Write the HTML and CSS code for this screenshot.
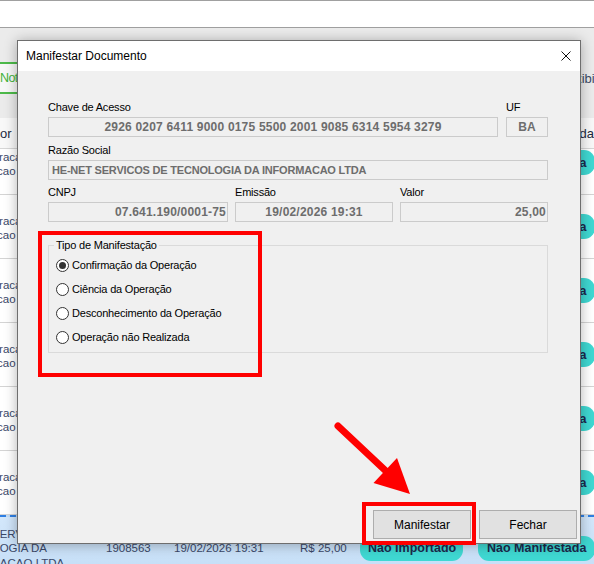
FILE: index.html
```html
<!DOCTYPE html>
<html lang="pt-BR">
<head>
<meta charset="utf-8">
<title>Manifestar Documento</title>
<link rel="stylesheet" href="styles.css">
</head>
<body>
<div class="app">
  <div class="topbar"></div>
  <div class="toolbar">
    <div class="tabrow">
      <div class="tab">Notas Recebidas</div>
      <div class="toolbar-link">Exibir</div>
    </div>
  </div>
  <div class="grid-head">
    <div class="hcell clip-end"><span>Fornecedor</span></div>
    <div class="hcell"></div>
    <div class="hcell"></div>
    <div class="hcell"></div>
    <div class="hcell"></div>
    <div class="hcell head-right">Manifestada</div>
  </div>
  <div class="grid-body">
    <div class="grid-scroll">
      <div class="grow">
        <div class="cell name"><span class="l1">Integracao</span><span class="l2">Informacao LTDA</span></div>
        <div class="cell"></div><div class="cell"></div><div class="cell"></div><div class="cell"></div>
        <div class="cell"><span class="pill pill-m">Não Manifestada</span></div>
      </div>
      <div class="grow">
        <div class="cell name"><span class="l1">Integracao</span><span class="l2">Informacao LTDA</span></div>
        <div class="cell"></div><div class="cell"></div><div class="cell"></div><div class="cell"></div>
        <div class="cell"><span class="pill pill-m">Não Manifestada</span></div>
      </div>
      <div class="grow">
        <div class="cell name"><span class="l1">Integracao</span><span class="l2">Informacao LTDA</span></div>
        <div class="cell"></div><div class="cell"></div><div class="cell"></div><div class="cell"></div>
        <div class="cell"><span class="pill pill-m">Não Manifestada</span></div>
      </div>
      <div class="grow">
        <div class="cell name"><span class="l1">Integracao</span><span class="l2">Informacao LTDA</span></div>
        <div class="cell"></div><div class="cell"></div><div class="cell"></div><div class="cell"></div>
        <div class="cell"><span class="pill pill-m">Não Manifestada</span></div>
      </div>
      <div class="grow">
        <div class="cell name"><span class="l1">Integracao</span><span class="l2">Informacao LTDA</span></div>
        <div class="cell"></div><div class="cell"></div><div class="cell"></div><div class="cell"></div>
        <div class="cell"><span class="pill pill-m">Não Manifestada</span></div>
      </div>
      <div class="grow">
        <div class="cell name"><span class="l1">Integracao</span><span class="l2">Informacao LTDA</span></div>
        <div class="cell"></div><div class="cell"></div><div class="cell"></div><div class="cell"></div>
        <div class="cell"><span class="pill pill-m">Não Manifestada</span></div>
      </div>
      <div class="grow selected">
        <div class="cell name three"><span class="s1">SERVICOS DE</span><span class="s2">TECNOLOGIA DA</span><span class="s3">INFORMACAO LTDA</span></div>
        <div class="cell txt">1908563</div>
        <div class="cell txt">19/02/2026 19:31</div>
        <div class="cell txt">R$ 25,00</div>
        <div class="cell"><span class="pill pill-i">Não Importado</span></div>
        <div class="cell"><span class="pill pill-m">Não Manifestada</span></div>
      </div>
    </div>
  </div>
</div>

<div class="dialog">
  <div class="dlg-title">
    <span class="dlg-caption">Manifestar Documento</span>
    <svg class="dlg-close" width="10" height="10" viewBox="0 0 10 10"><path d="M0.5 0.5 L9.5 9.5 M9.5 0.5 L0.5 9.5" stroke="#111" stroke-width="1" fill="none"/></svg>
  </div>
  <div class="dlg-body">
    <div class="frow frow-a">
      <div class="fcol">
        <div class="lbl">Chave de Acesso</div>
        <div class="fld center num">2926 0207 6411 9000 0175 5500 2001 9085 6314 5954 3279</div>
      </div>
      <div class="fcol">
        <div class="lbl">UF</div>
        <div class="fld center">BA</div>
      </div>
    </div>
    <div class="frow frow-b">
      <div class="fcol">
        <div class="lbl">Razão Social</div>
        <div class="fld left caps">HE-NET SERVICOS DE TECNOLOGIA DA INFORMACAO LTDA</div>
      </div>
    </div>
    <div class="frow frow-c">
      <div class="fcol">
        <div class="lbl">CNPJ</div>
        <div class="fld right num">07.641.190/0001-75</div>
      </div>
      <div class="fcol">
        <div class="lbl">Emissão</div>
        <div class="fld center num">19/02/2026 19:31</div>
      </div>
      <div class="fcol">
        <div class="lbl">Valor</div>
        <div class="fld right num">25,00</div>
      </div>
    </div>
    <fieldset class="group">
      <legend>Tipo de Manifestação</legend>
      <div class="radio"><span class="rdot checked"></span>Confirmação da Operação</div>
      <div class="radio"><span class="rdot"></span>Ciência da Operação</div>
      <div class="radio"><span class="rdot"></span>Desconhecimento da Operação</div>
      <div class="radio"><span class="rdot"></span>Operação não Realizada</div>
    </fieldset>
    <div class="btnrow">
      <button class="btn">Manifestar</button>
      <button class="btn">Fechar</button>
    </div>
  </div>
</div>

<svg class="annot" width="594" height="564" viewBox="0 0 594 564">
  <rect x="40" y="233" width="220" height="142" fill="none" stroke="#ff0000" stroke-width="4"/>
  <rect x="364" y="504" width="110" height="39" fill="none" stroke="#ff0000" stroke-width="4"/>
  <line x1="338" y1="426" x2="388" y2="473" stroke="#ff0000" stroke-width="7" stroke-linecap="round"/>
  <polygon points="410,494 373.5,483 397,458" fill="#ff0000"/>
</svg>
</body>
</html>
```
FILE: styles.css
```css
* { box-sizing: border-box; }
html, body { margin: 0; padding: 0; }
body {
  width: 594px;
  height: 564px;
  overflow: hidden;
  position: relative;
  background: #f0f0f0;
  font-family: "Liberation Sans", Arial, sans-serif;
}

/* ---------- background application ---------- */
.app { display: flex; flex-direction: column; height: 564px; }
.topbar {
  flex: none;
  height: 28px;
  background: #ffffff;
  border-top: 1px solid #a0a0a0;
  border-bottom: 1px solid #a0a0a0;
}
.toolbar {
  flex: none;
  height: 90px;
  padding-top: 34px;
  background: #ebebeb;
}
.tabrow { display: flex; justify-content: space-between; align-items: center; height: 32px; }
.tab {
  width: 120px;
  height: 32px;
  border-top: 2px solid #4dba4a;
  border-bottom: 2px solid #4dba4a;
  background: #f7f7f7;
  color: #3fb23a;
  font-size: 12.5px;
  letter-spacing: -0.6px;
  line-height: 28px;
  white-space: nowrap;
  overflow: hidden;
}
.toolbar-link { font-size: 13px; color: #3c4a66; margin-right: -5px; white-space: nowrap; }

.grid-head {
  flex: none;
  display: grid;
  grid-template-columns: 106px 68px 126px 60px 118px 118px;
  height: 31px;
  background: #f8f8f8;
  border-bottom: 1px solid #d6d6d6;
  font-size: 13px;
  color: #1e2a3e;
}
.hcell { display: flex; align-items: center; white-space: nowrap; overflow: hidden; }
.clip-end { width: 11.5px; justify-content: flex-end; }
.head-right { justify-content: flex-end; padding-right: 2px; }

.grid-body { flex: 1; overflow: hidden; background: #ffffff; }
.grid-scroll { margin-top: -18px; }
.grow {
  display: grid;
  grid-template-columns: 106px 68px 126px 60px 118px 118px;
  height: 64px;
  border-bottom: 1px solid #d4d4d4;
  font-size: 11.5px;
  color: #3a4868;
}
.cell { display: flex; align-items: center; white-space: nowrap; overflow: visible; }
.name { flex-direction: column; align-items: flex-start; justify-content: center; padding-top: 3px; overflow: hidden; line-height: 14.5px; }
.name .l1 { margin-left: -26.5px; }
.name .l2 { margin-left: -42px; }
.name.three { padding-top: 1px; }
.name .s1 { margin-left: -8px; }
.name .s2 { margin-left: -47px; }
.name .s3 { margin-left: -45.5px; }

.selected {
  background: linear-gradient(#d3e7fb, #c3ddf6);
  border-top: 2px dashed #2f7fe3;
  border-bottom: none;
}
.pill {
  display: inline-flex;
  align-items: center;
  height: 25px;
  border-radius: 11px;
  background: #3fd8d2;
  color: #1b2a4c;
  font-weight: bold;
  font-size: 12.5px;
  padding: 0 8px;
}
.pill-i { width: 103px; }
.pill-m { width: 117px; padding-left: 9px; }

/* ---------- dialog ---------- */
.dialog {
  position: absolute;
  left: 17px;
  top: 40px;
  width: 564px;
  height: 504px;
  background: #f0f0f0;
  border: 1px solid #6e6e6e;
  box-shadow: 0 1px 12px rgba(0, 0, 0, 0.3);
  display: flex;
  flex-direction: column;
}
.dlg-title {
  flex: none;
  height: 30px;
  background: #ffffff;
  display: flex;
  align-items: center;
  justify-content: space-between;
  padding: 0 9px 0 8px;
}
.dlg-caption { font-size: 12px; color: #000; }
.dlg-close { display: block; }

.dlg-body {
  flex: 1;
  display: flex;
  flex-direction: column;
  padding: 29px 32px 4px 30px;
}
.lbl {
  font-size: 11px;
  line-height: 14px;
  height: 14px;
  letter-spacing: -0.2px;
  color: #000;
  margin-bottom: 3px;
  white-space: nowrap;
}
.fld {
  height: 20px;
  border: 1px solid #cbcbcb;
  background: #f0f0f0;
  color: #6d6d6d;
  font-weight: bold;
  font-size: 12px;
  line-height: 18px;
  white-space: nowrap;
  overflow: hidden;
}
.fld.num { letter-spacing: 0.2px; }
.fld.caps { font-size: 11px; letter-spacing: -0.2px; }
.fld.center { text-align: center; }
.fld.left { text-align: left; padding-left: 3px; }
.fld.right { text-align: right; padding-right: 1px; }

.frow { display: grid; }
.frow-a { grid-template-columns: 1fr 42px; column-gap: 8px; }
.frow-b { grid-template-columns: 1fr; margin-top: 6px; }
.frow-c { grid-template-columns: 180px 158px 148px; column-gap: 7px; margin-top: 5px; }

.group {
  margin: 16px 0 0 0;
  padding: 1px 0 3px 7px;
  border: 1px solid #dadada;
  min-width: 0;
}
.group legend {
  font-size: 11px;
  line-height: 14px;
  letter-spacing: -0.2px;
  padding: 0 2px;
  margin-left: -2px;
  color: #000;
}
.radio {
  display: flex;
  align-items: center;
  height: 24px;
  font-size: 11px;
  letter-spacing: -0.2px;
  color: #000;
}
.rdot {
  position: relative;
  width: 13px;
  height: 13px;
  border: 1px solid #333333;
  border-radius: 50%;
  background: #ffffff;
  margin-right: 3px;
  flex: none;
}
.rdot.checked::after {
  content: "";
  position: absolute;
  left: 2px;
  top: 2px;
  width: 7px;
  height: 7px;
  border-radius: 50%;
  background: #333333;
}

.btnrow {
  margin-top: auto;
  margin-right: -29px;
  display: flex;
  justify-content: flex-end;
  gap: 8px;
}
.btn {
  width: 98px;
  height: 29px;
  border: 1px solid #adadad;
  background: #e1e1e1;
  color: #000;
  font-family: "Liberation Sans", Arial, sans-serif;
  font-size: 12px;
  padding: 0;
  margin: 0;
}

/* ---------- annotation overlay ---------- */
.annot { position: absolute; left: 0; top: 0; pointer-events: none; }
```
